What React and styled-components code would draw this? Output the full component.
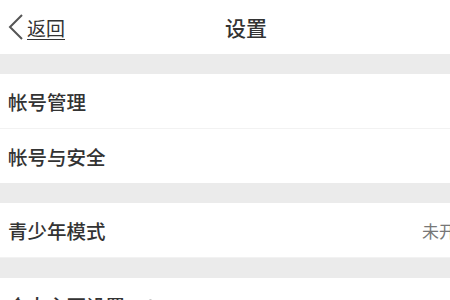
import React from 'react';
import styled, { createGlobalStyle } from 'styled-components';
import { UserRound } from 'lucide-react';

const GlobalStyle = createGlobalStyle`
  html, body {
    margin: 0;
    padding: 0;
    background: #ebebeb;
    overflow: hidden;
  }
  body {
    font-family: "Noto Sans CJK SC", "Noto Sans", sans-serif;
    color: #333;
  }
`;

const Page = styled.div`
  width: 492px;
  background: #ebebeb;
`;

const Header = styled.header`
  height: 54px;
  display: grid;
  grid-template-columns: 1fr auto 1fr;
  align-items: center;
  background: #fff;
  padding: 0 8px;
`;

const Back = styled.a`
  display: flex;
  align-items: center;
  gap: 3px;
  color: #333;
  font-size: 19px;
  text-decoration: underline;
  text-underline-offset: 3px;
  text-decoration-thickness: 1px;
  cursor: pointer;

  svg {
    flex: none;
  }
`;

const Title = styled.h1`
  margin: 0;
  font-size: 21px;
  font-weight: 500;
  color: #333;
`;

const Gap = styled.div`
  height: 20px;
`;

const Group = styled.section`
  background: #fff;
`;

const Row = styled.div`
  height: ${p => (p.$divider ? '55px' : '54px')};
  display: flex;
  align-items: center;
  padding: 0 19px 0 8px;
  font-size: 19.5px;
  font-weight: 500;
  color: #333;
  border-bottom: ${p => (p.$divider ? '1px solid #f2f2f2' : 'none')};
  box-sizing: border-box;
`;

const Label = styled.span`
  display: flex;
  align-items: center;
  gap: 18px;
  flex: 1;
`;

const Value = styled.span`
  font-size: 17px;
  font-weight: 400;
  color: #777;
`;

function Chevron() {
  return (
    <svg width="16" height="26" viewBox="0 0 16 26">
      <polyline points="14,1 2,13 14,25" fill="none" stroke="#555" strokeWidth="2" />
    </svg>
  );
}

export default function App() {
  return (
    <Page>
      <GlobalStyle />
      <Header>
        <Back><Chevron /><span>返回</span></Back>
        <Title>设置</Title>
        <div />
      </Header>

      <Gap />
      <Group>
        <Row $divider><Label>帐号管理</Label></Row>
        <Row><Label>帐号与安全</Label></Row>
      </Group>

      <Gap />
      <Group>
        <Row $divider>
          <Label>青少年模式</Label>
          <Value>未开启</Value>
        </Row>
      </Group>

      <Gap />
      <Group>
        <Row $divider>
          <Label>
            个人主页设置
            <UserRound size={15} color="#999" strokeWidth={1.6} />
          </Label>
        </Row>
      </Group>
    </Page>
  );
}
